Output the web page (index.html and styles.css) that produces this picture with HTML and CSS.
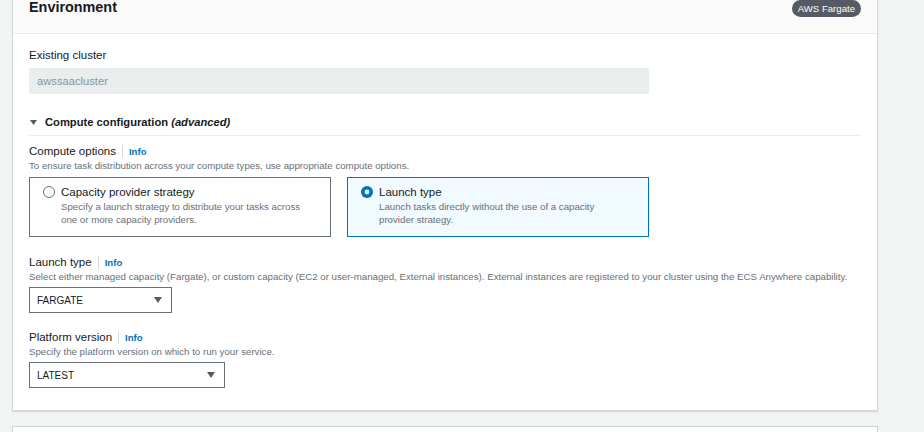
FILE: index.html
```html
<!DOCTYPE html>
<html lang="en">
<head>
<meta charset="utf-8">
<title>Environment</title>
<link rel="stylesheet" href="styles.css">
</head>
<body>
<div class="page">
  <section class="card">
    <header class="card-header">
      <h2 class="card-title">Environment</h2>
      <span class="badge">AWS Fargate</span>
    </header>
    <div class="card-body">
      <div class="field">
        <div class="label-row"><span class="label">Existing cluster</span></div>
        <div class="input input-disabled">awssaacluster</div>
      </div>

      <div class="expander">
        <div class="expander-head">
          <svg class="caret" width="7" height="5" viewBox="0 0 7 5"><path d="M0 0H7L3.5 5Z" fill="#545b64"/></svg>
          <span>Compute configuration <i>(advanced)</i></span>
        </div>
        <div class="expander-body">
          <div class="field">
            <div class="label-row"><span class="label">Compute options</span><span class="sep"></span><a class="info">Info</a></div>
            <div class="desc">To ensure task distribution across your compute types, use appropriate compute options.</div>
            <div class="tiles">
              <div class="tile">
                <svg class="radio" width="12" height="12" viewBox="0 0 12 12"><circle cx="6" cy="6" r="5.5" fill="#fff" stroke="#687078" stroke-width="1"/></svg>
                <div class="tile-text">
                  <div class="tile-title">Capacity provider strategy</div>
                  <div class="tile-desc">Specify a launch strategy to distribute your tasks across one or more capacity providers.</div>
                </div>
              </div>
              <div class="tile tile-selected">
                <svg class="radio" width="12" height="12" viewBox="0 0 12 12"><circle cx="6" cy="6" r="6" fill="#0073bb"/><circle cx="6" cy="6" r="2.4" fill="#fff"/></svg>
                <div class="tile-text">
                  <div class="tile-title">Launch type</div>
                  <div class="tile-desc">Launch tasks directly without the use of a capacity provider strategy.</div>
                </div>
              </div>
            </div>
          </div>

          <div class="field field-gap">
            <div class="label-row"><span class="label">Launch type</span><span class="sep"></span><a class="info">Info</a></div>
            <div class="desc">Select either managed capacity (Fargate), or custom capacity (EC2 or user-managed, External instances). External instances are registered to your cluster using the ECS Anywhere capability.</div>
            <div class="select select-launch">
              <span>FARGATE</span>
              <svg width="8" height="6" viewBox="0 0 8 6"><path d="M0 0H8L4 6Z" fill="#545b64"/></svg>
            </div>
          </div>

          <div class="field field-gap2">
            <div class="label-row"><span class="label">Platform version</span><span class="sep"></span><a class="info">Info</a></div>
            <div class="desc">Specify the platform version on which to run your service.</div>
            <div class="select select-platform">
              <span>LATEST</span>
              <svg width="8" height="6" viewBox="0 0 8 6"><path d="M0 0H8L4 6Z" fill="#545b64"/></svg>
            </div>
          </div>
        </div>
      </div>
    </div>
  </section>
  <section class="card card-next"></section>
</div>
</body>
</html>
```

FILE: styles.css
```css
* { box-sizing: border-box; }
html, body {
  margin: 0;
  padding: 0;
  background: #f2f3f3;
  font-family: "Liberation Sans", Arial, sans-serif;
  color: #16191f;
  overflow: hidden;
}
.page {
  padding-left: 12px;
  padding-top: 1px;
  margin-top: -1px;
  width: 924px;
  height: 433px;
}
.card {
  width: 866px;
  background: #fff;
  border: 1px solid #d5dbdb;
  box-shadow: 0 1px 1px rgba(0, 28, 36, 0.12);
  margin-top: -15px;
}
.card-next {
  margin-top: 15px;
  height: 60px;
  border-color: #cfd5d6;
}
.card-header {
  display: flex;
  align-items: center;
  justify-content: space-between;
  background: #fafafa;
  border-bottom: 1px solid #eaeded;
  padding: 11px 16px 16px;
}
.card-title {
  margin: 0;
  font-size: 14.4px;
  line-height: 20px;
  font-weight: 700;
}
.badge {
  background: #545b64;
  color: #fff;
  font-size: 9.6px;
  line-height: 17px;
  padding: 0 6px;
  border-radius: 9px;
  margin-top: 3px;
}
.card-body {
  padding: 13px 16px 22px;
}
.label-row {
  display: flex;
  align-items: center;
  height: 16px;
}
.label {
  font-size: 11.5px;
  line-height: 16px;
}
.sep {
  width: 1px;
  height: 13px;
  background: #d5dbdb;
  margin: 0 6px 0 6px;
}
.info {
  color: #0073bb;
  font-size: 9.6px;
  font-weight: 700;
}
.desc {
  font-size: 9.7px;
  line-height: 13px;
  color: #687078;
}
.input {
  margin-top: 5px;
  width: 620px;
  height: 26px;
  padding: 0 8px;
  font-size: 11.2px;
  line-height: 26px;
}
.input-disabled {
  background: #eaeded;
  color: #879596;
}
.expander {
  margin-top: 20px;
}
.expander-head {
  display: flex;
  align-items: center;
  font-size: 11.2px;
  font-weight: 700;
  line-height: 17px;
  padding: 0 0 4px 1px;
  border-bottom: 1px solid #eaeded;
}
.caret {
  margin-right: 8px;
}
.expander-body {
  padding-top: 7px;
}
.tiles {
  margin-top: 5px;
  display: grid;
  grid-template-columns: 302px 302px;
  column-gap: 16px;
}
.tile {
  display: flex;
  gap: 6px;
  height: 60px;
  border: 1px solid #687078;
  padding: 6px 24px 10px 13px;
}
.tile-selected {
  border-color: #0073bb;
  background: #f1faff;
}
.radio {
  margin-top: 2px;
  flex: none;
}
.tile-title {
  font-size: 11.5px;
  line-height: 16px;
}
.tile-desc {
  font-size: 9.7px;
  line-height: 13px;
  color: #687078;
}
.field-gap {
  margin-top: 17px;
}
.field-gap2 {
  margin-top: 16px;
}
.select {
  margin-top: 4px;
  height: 26px;
  border: 1px solid #687078;
  display: flex;
  align-items: center;
  justify-content: space-between;
  padding: 0 9px 0 7px;
  font-size: 10px;
  background: #fff;
}
.select-launch { width: 143px; }
.select-platform { width: 196px; }
```
